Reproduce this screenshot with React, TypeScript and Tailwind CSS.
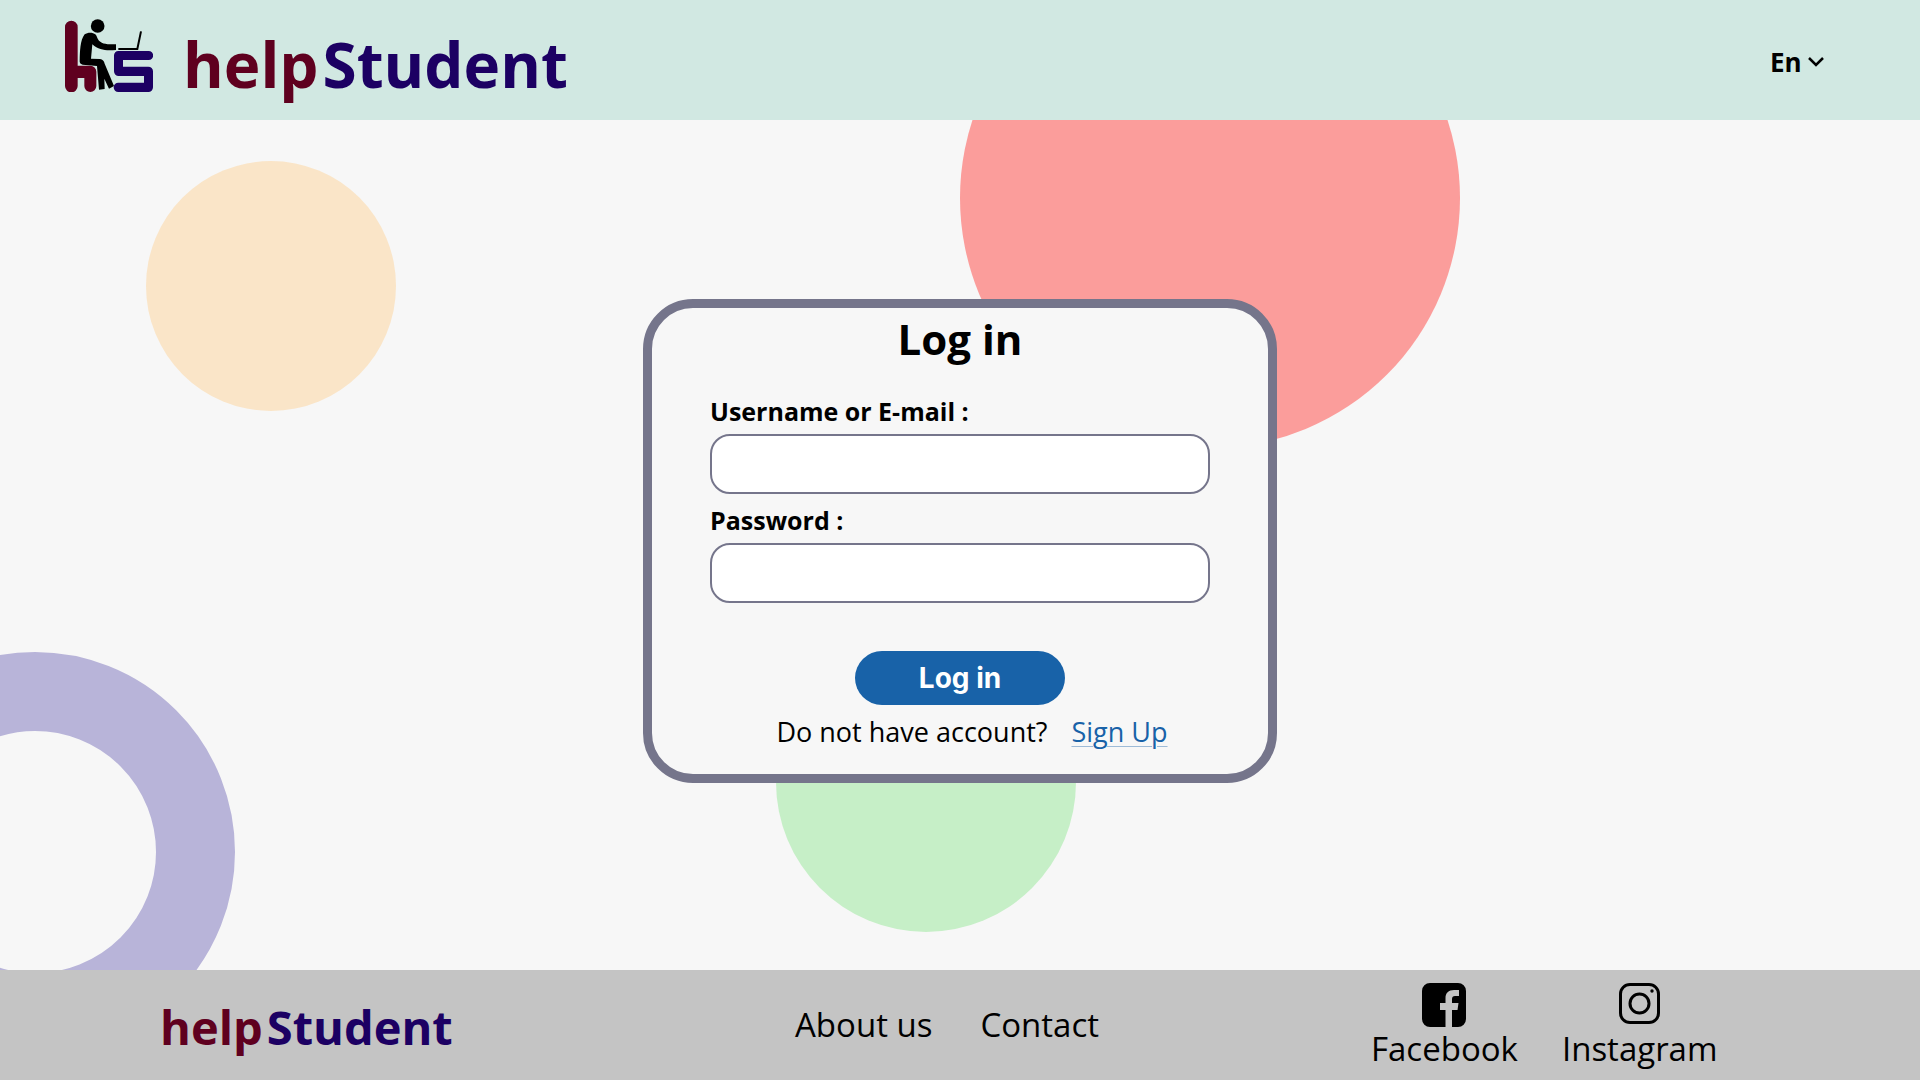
import React from "react";

function LogoMark() {
  return (
    <svg viewBox="45 45 264 231" className="h-[77px] w-[88px] shrink-0" aria-hidden="true">
      <path
        fill="#5f001f"
        d="M45 81a18 18 0 0 1 38 0V197H121a18 18 0 0 1 18 18V258a18 18 0 0 1-36 0V234H83V258a18 18 0 0 1-38 0Z"
      />
      <path
        fill="#1c0063"
        d="M205 153H296a13 13 0 0 1 0 27H219V200H295a14 14 0 0 1 14 14V262a14 14 0 0 1-14 14H205a14 14 0 0 1 0-28H282V228H206a14 14 0 0 1-14-14V166a13 13 0 0 1 13-13Z"
      />
      <circle cx="143" cy="78" r="20.500" />
      <path d="M104 103C112 97 128 96 136 103C142 109 141 116 147 122C157 132 172 133 198 133V150C170 152 148 152 127 133L123 176L150 177C158 178 162 183 164 191L192 258L177 266L163 236L164 267L147 269L141 198L98 194C91 193 88 188 89 181C90 155 90 121 104 103Z" />
      <path d="M205 147H262L273 94" fill="none" stroke="#000" strokeWidth="6" />
    </svg>
  );
}

function Wordmark({ className }: { className: string }) {
  return (
    <span className={`flex font-bold leading-none ${className}`}>
      <span className="text-[#5f001f]">help</span>
      <span className="text-[#1c0063]">Student</span>
    </span>
  );
}

function FacebookIcon() {
  return (
    <svg viewBox="0 0 44 44" className="size-11" aria-hidden="true">
      <path d="M8 0H36a8 8 0 0 1 8 8V36a8 8 0 0 1-8 8H30V27H35.500L36.500 20H30V16C30 14 31 13 33 13H37V7H32C26.500 7 23.500 10 23.500 15V20H18V27H23.500V44H8a8 8 0 0 1-8-8V8a8 8 0 0 1 8-8Z" />
    </svg>
  );
}

function InstagramIcon() {
  return (
    <svg viewBox="0 0 41 41" className="mb-[3px] size-[41px]" fill="none" stroke="#000" strokeWidth="3" aria-hidden="true">
      <rect x="1.500" y="1.500" width="38" height="38" rx="9.500" />
      <circle cx="20.500" cy="20.500" r="9.500" />
      <circle cx="33" cy="8" r="1.700" fill="#000" stroke="none" />
    </svg>
  );
}

function Field({ id, label, type }: { id: string; label: string; type: string }) {
  return (
    <div className="flex flex-col">
      <label htmlFor={id} className="text-[25px] leading-10 font-bold">
        {label}
      </label>
      <input
        id={id}
        type={type}
        className="mt-[3px] h-[60px] w-full rounded-[20px] border-2 border-[#75758b] bg-white px-4 text-2xl outline-none"
      />
    </div>
  );
}

export default function App() {
  return (
    <div className="flex min-h-screen flex-col bg-[#f7f7f7] font-['Open_Sans',sans-serif] text-black">
      <header className="flex h-[120px] items-center justify-between bg-[#d1e8e2] pr-24 pl-[65px]">
        <a href="#" aria-label="helpStudent" className="flex items-center gap-[30px]">
          <div className="pb-[14px]">
            <LogoMark />
          </div>
          <Wordmark className="gap-1 pt-2 text-[62px]" />
        </a>
        <div className="relative flex items-center pt-1">
          <select
            aria-label="Language"
            className="appearance-none bg-transparent pr-[22px] text-[26px] leading-9 font-bold outline-none"
          >
            <option>En</option>
          </select>
          <svg viewBox="0 0 16 12" className="pointer-events-none absolute right-0 h-3 w-4" fill="none" stroke="#000" strokeWidth="2.500" aria-hidden="true">
            <path d="M1 2L8 9L15 2" />
          </svg>
        </div>
      </header>

      <main className="relative flex grow items-start justify-center overflow-hidden pt-[179px] pb-40">
        <div className="absolute top-[41px] left-[146px] size-[250px] rounded-full bg-[#fae5c8]" />
        <div className="absolute -top-[172px] left-1/2 size-[500px] rounded-full bg-[#fb9d9b]" />
        <div className="absolute top-[512px] left-1/2 -ml-[184px] size-[300px] rounded-full bg-[#c6efc7]" />
        <div className="absolute top-[532px] -left-[165px] size-[400px] rounded-full border-[79px] border-[#b8b4d9]" />

        <form
          onSubmit={(e) => e.preventDefault()}
          className="relative flex w-[634px] flex-col rounded-[50px] border-[9px] border-[#75758b] bg-[#f7f7f7] px-[58px] pb-[22px]"
        >
          <h1 className="text-center text-[42px] leading-[62px] font-bold">Log in</h1>
          <div className="mt-[21px] flex flex-col gap-[6px]">
            <Field id="username" label="Username or E-mail :" type="text" />
            <Field id="password" label="Password :" type="password" />
          </div>
          <button
            type="submit"
            className="mt-12 h-[54px] w-[210px] self-center rounded-full bg-[#1862a8] font-['Inter',sans-serif] text-[28px] font-bold text-white"
          >
            Log in
          </button>
          <p className="mt-[7px] flex justify-center gap-6 pl-6 text-[27px] leading-10">
            <span>Do not have account?</span>
            <a href="#" className="text-[#1862a8] underline decoration-[#1862a8]/40 decoration-1 underline-offset-4">
              Sign Up
            </a>
          </p>
        </form>
      </main>

      <footer className="relative grid h-[110px] grid-cols-3 items-center bg-[#c4c4c4] text-[33px] leading-10">
        <a href="#" aria-label="helpStudent" className="pt-1 pl-40">
          <Wordmark className="gap-1 text-[47px]" />
        </a>
        <nav className="flex gap-12 pl-[155px]">
          <a href="#">About us</a>
          <a href="#">Contact</a>
        </nav>
        <nav className="flex gap-11 pt-0.5 pl-[91px]">
          <a href="#" className="flex flex-col items-center gap-0.5">
            <FacebookIcon />
            Facebook
          </a>
          <a href="#" className="flex flex-col items-center gap-0.5">
            <InstagramIcon />
            Instagram
          </a>
        </nav>
      </footer>
    </div>
  );
}
